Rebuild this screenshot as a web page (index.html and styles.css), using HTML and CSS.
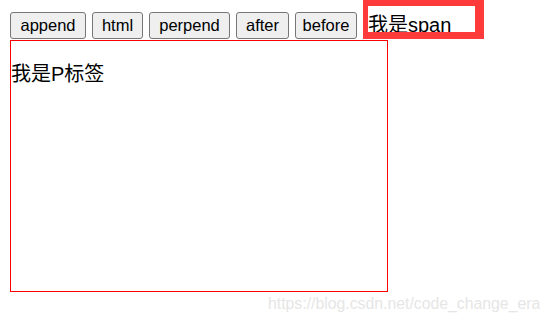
FILE: index.html
```html
<!DOCTYPE html>
<html>
<head>
<meta charset="utf-8">
<link rel="stylesheet" href="styles.css">
</head>
<body>
<div class="toolbar">
  <button class="btn w-append">append</button>
  <button class="btn w-html">html</button>
  <button class="btn w-perpend">perpend</button>
  <button class="btn w-after">after</button>
  <button class="btn w-before">before</button>
  <span class="tag"><span class="tag-text">我是span</span></span>
</div>
<div class="box">
  <p class="ptext">我是P标签</p>
</div>
<div class="watermark">https://blog.csdn.net/code_change_era</div>
</body>
</html>
```

FILE: styles.css
```css
html, body {
  margin: 0;
  padding: 0;
  background: #ffffff;
  font-family: "Liberation Sans", "Noto Sans CJK SC", Arial, sans-serif;
}
body {
  position: relative;
  width: 551px;
  height: 323px;
  overflow: hidden;
}
.toolbar {
  display: flex;
  align-items: flex-end;
  gap: 6px;
  padding-left: 10px;
  height: 39px;
}
.btn {
  box-sizing: border-box;
  height: 27px;
  margin: 0;
  padding: 0;
  background: #efefef;
  border: 1px solid #767676;
  border-radius: 3px;
  font-family: "Liberation Sans", "Noto Sans CJK SC", Arial, sans-serif;
  font-size: 16.5px;
  color: #000;
}
.w-append { width: 76px; }
.w-html { width: 51px; }
.w-perpend { width: 81px; }
.w-after { width: 53px; }
.w-before { width: 62px; }
.tag {
  box-sizing: border-box;
  align-self: flex-start;
  width: 121px;
  height: 39px;
  border-style: solid;
  border-color: #ff3a3a;
  border-width: 6px 9px 7px 5px;
  overflow: hidden;
  background: #fff;
}
.tag-text {
  display: block;
  font-size: 20px;
  line-height: 30px;
  margin-top: 4px;
  color: #000;
  white-space: nowrap;
}
.box {
  box-sizing: border-box;
  margin-left: 10px;
  margin-top: 1px;
  width: 378px;
  height: 252px;
  border: 1px solid #ff0000;
}
.ptext {
  margin: 20px 0 0 0;
  font-size: 20px;
  line-height: 26px;
  color: #000;
}
.watermark {
  position: absolute;
  left: 268px;
  top: 294px;
  font-size: 15.8px;
  line-height: 20px;
  color: #e6e6e6;
  white-space: nowrap;
}
```
